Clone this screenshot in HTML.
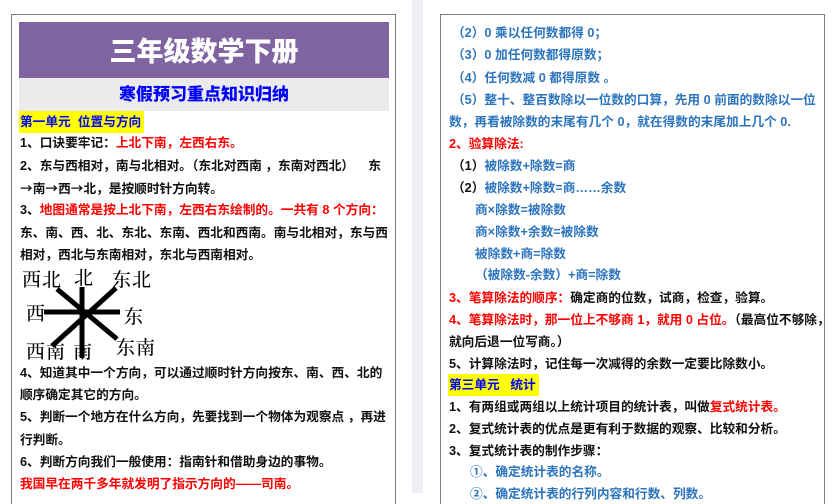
<!DOCTYPE html>
<html><head><meta charset="utf-8"><style>
*{margin:0;padding:0;box-sizing:border-box}
body{width:840px;height:493px;overflow:hidden;background:#fff;position:relative;font-family:"Liberation Sans","Noto Sans CJK SC",sans-serif;font-size:12.7px;color:#111;font-weight:bold}
.strip{position:absolute;left:412px;top:0;width:11px;height:493px;background:#eef0f5}
.page{position:absolute;top:14px;height:490px;border:1.5px solid #7a7a7a;border-bottom:none;background:#fff}
.l{left:11px;width:385px}
.r{left:440px;width:385px}
.hd{position:absolute;left:7px;top:7px;width:370px;height:56px;background:#8064a2;color:#fff;font-size:27px;text-align:center;line-height:56px;font-family:"Noto Sans CJK SC",sans-serif;font-weight:900}
.sub{position:absolute;left:7px;top:63px;width:370px;height:33px;background:#ebebeb;color:#0000ff;font-size:17px;text-align:center;line-height:33px;font-weight:900}
.ln{position:absolute;white-space:nowrap;line-height:20px}
.red{color:#f00}.bl{color:#2c74be}
.yl{background:#ff0;color:#0000ff}
.ar{font-family:"Noto Sans CJK SC",sans-serif}
.dg{position:absolute;font-family:"Noto Serif CJK SC",serif;font-weight:500;font-size:19px;color:#000;letter-spacing:1px}
</style></head><body>
<div class="strip"></div>
<div class="page l">
<div class="hd">三年级数学下册</div>
<div class="sub">寒假预习重点知识归纳</div>
<div class="ln yl" style="left:7px;top:96px;padding:1px 3px 1px 1px;height:22px">第一单元&nbsp;&nbsp;位置与方向</div>
<div class="ln" style="left:8px;top:118px">1、口诀要牢记：<span class="red">上北下南，左西右东。</span></div>
<div class="ln" style="left:8px;top:141px">2、东与西相对，南与北相对。（东北对西南 ，东南对西北）&nbsp;&nbsp;&nbsp;&nbsp;东</div>
<div class="ln" style="left:8px;top:163px"><span class="ar">→</span>南<span class="ar">→</span>西<span class="ar">→</span>北，是按顺时针方向转。</div>
<div class="ln" style="left:8px;top:185px">3、<span class="red">地图通常是按上北下南，左西右东绘制的。一共有 8 个方向：</span></div>
<div class="ln" style="left:8px;top:208px">东、南、西、北、东北、东南、西北和西南。南与北相对，东与西</div>
<div class="ln" style="left:8px;top:230px">相对，西北与东南相对，东北与西南相对。</div>
<svg style="position:absolute;left:0;top:0" width="385" height="480"><g stroke="#000" stroke-width="5" stroke-linecap="butt">
<line x1="32" y1="297" x2="108" y2="297"/><line x1="70" y1="272" x2="70" y2="343"/>
<line x1="45" y1="274" x2="105" y2="324"/><line x1="104" y1="273" x2="40" y2="331"/></g></svg>
<div class="dg" style="left:10px;top:250px">西北</div>
<div class="dg" style="left:62px;top:248px">北</div>
<div class="dg" style="left:100px;top:250px">东北</div>
<div class="dg" style="left:14px;top:284px">西</div>
<div class="dg" style="left:112px;top:287px">东</div>
<div class="dg" style="left:14px;top:322px">西南</div>
<div class="dg" style="left:61px;top:322px">南</div>
<div class="dg" style="left:104px;top:318px">东南</div>
<div class="ln" style="left:8px;top:348px">4、知道其中一个方向，可以通过顺时针方向按东、南、西、北的</div>
<div class="ln" style="left:8px;top:370px">顺序确定其它的方向。</div>
<div class="ln" style="left:8px;top:392px">5、判断一个地方在什么方向，先要找到一个物体为观察点 ，再进</div>
<div class="ln" style="left:8px;top:415px">行判断。</div>
<div class="ln" style="left:8px;top:437px">6、判断方向我们一般使用：指南针和借助身边的事物。</div>
<div class="ln red" style="left:8px;top:459px">我国早在两千多年就发明了指示方向的——司南。</div>
</div>
<div class="page r">
<div class="ln bl" style="left:11px;top:8px">（2）0 乘以任何数都得 0；</div>
<div class="ln bl" style="left:11px;top:30px">（3）0 加任何数都得原数；</div>
<div class="ln bl" style="left:11px;top:53px">（4）任何数减 0 都得原数 。</div>
<div class="ln bl" style="left:11px;top:75px">（5）整十、整百数除以一位数的口算，先用 0 前面的数除以一位</div>
<div class="ln bl" style="left:8px;top:97px">数，再看被除数的末尾有几个 0，就在得数的末尾加上几个 0.</div>
<div class="ln red" style="left:8px;top:119px">2、验算除法:</div>
<div class="ln" style="left:11px;top:141px">（1）<span class="bl">被除数+除数=商</span></div>
<div class="ln" style="left:11px;top:163px">（2）<span class="bl">被除数+除数=商……余数</span></div>
<div class="ln bl" style="left:34px;top:185px">商×除数=被除数</div>
<div class="ln bl" style="left:34px;top:207px">商×除数+余数=被除数</div>
<div class="ln bl" style="left:34px;top:229px">被除数+商=除数</div>
<div class="ln bl" style="left:34px;top:250px">（被除数-余数）+商=除数</div>
<div class="ln" style="left:8px;top:273px"><span class="red">3、笔算除法的顺序：</span>确定商的位数，试商，检查，验算。</div>
<div class="ln" style="left:8px;top:295px"><span class="red">4、笔算除法时，那一位上不够商 1，就用 0 占位。</span>（最高位不够除，</div>
<div class="ln" style="left:8px;top:317px">就向后退一位写商。）</div>
<div class="ln" style="left:8px;top:339px">5、计算除法时，记住每一次减得的余数一定要比除数小。</div>
<div class="ln yl" style="left:7px;top:359px;padding:1px 3px 1px 1px;height:22px">第三单元&nbsp;&nbsp;&nbsp;统计</div>
<div class="ln" style="left:8px;top:382px">1、有两组或两组以上统计项目的统计表，叫做<span class="red">复式统计表。</span></div>
<div class="ln" style="left:8px;top:404px">2、复式统计表的优点是更有利于数据的观察、比较和分析。</div>
<div class="ln" style="left:8px;top:426px">3、复式统计表的制作步骤：</div>
<div class="ln bl" style="left:29px;top:447px">①、确定统计表的名称。</div>
<div class="ln bl" style="left:29px;top:469px">②、确定统计表的行列内容和行数、列数。</div>
</div>
</body></html>
